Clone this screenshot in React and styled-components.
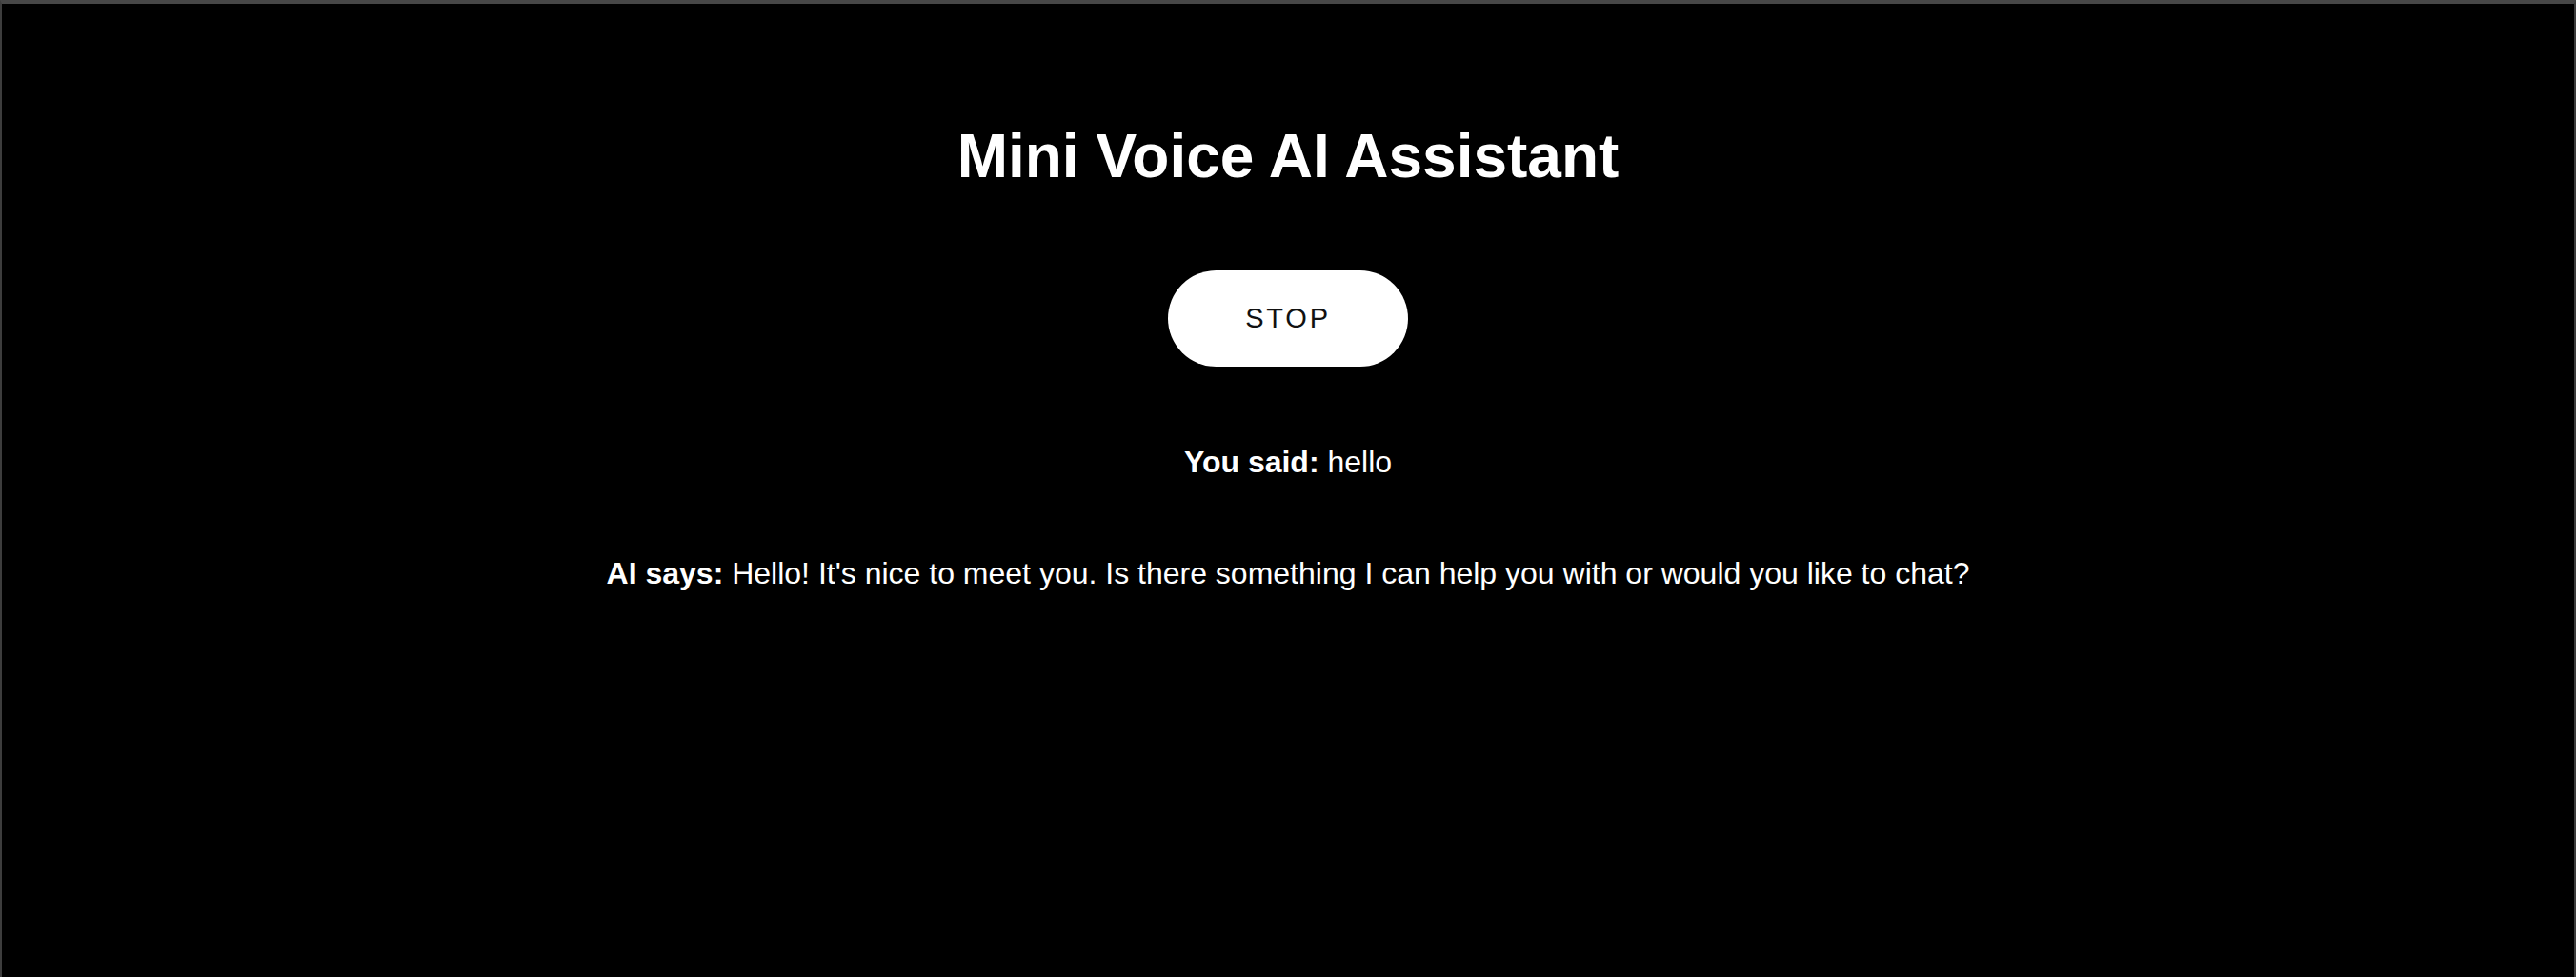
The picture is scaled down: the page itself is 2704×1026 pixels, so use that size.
import React from "react";
import styled, { createGlobalStyle } from "styled-components";

const GlobalStyle = createGlobalStyle`
  html, body {
    margin: 0;
    padding: 0;
    background: #000;
  }
  body {
    font-family: "Liberation Sans", Arial, Helvetica, sans-serif;
    color: #fff;
  }
`;

const Page = styled.main`
  box-sizing: border-box;
  min-height: 100vh;
  background: #000;
  border-top: 4px solid #474747;
  border-left: 2px solid #3d3d3d;
  border-right: 2px solid #3d3d3d;
  padding-top: 123px;
  display: flex;
  flex-direction: column;
  align-items: center;
`;

const Title = styled.h1`
  margin: 0;
  font-size: 64px;
  font-weight: 700;
  line-height: normal;
  color: #fff;
`;

const PillButton = styled.button`
  margin-top: 83px;
  border: none;
  border-radius: 60px;
  background: #fff;
  color: #111;
  font-family: "Liberation Sans", Arial, Helvetica, sans-serif;
  font-size: 29px;
  font-weight: 400;
  letter-spacing: 2.8px;
  line-height: 33px;
  padding: 34px 81px;
  cursor: pointer;
`;

const Line = styled.p`
  margin: ${(p) => p.$gap}px 0 0;
  font-size: 32px;
  line-height: normal;
  color: #fff;
  text-align: center;
`;

const Label = styled.strong`
  font-weight: 700;
`;

export default function App() {
  return (
    <>
      <GlobalStyle />
      <Page>
        <Title>Mini Voice AI Assistant</Title>
        <PillButton>STOP</PillButton>
        <Line $gap={82}>
          <Label>You said:</Label> hello
        </Line>
        <Line $gap={80}>
          <Label>AI says:</Label> Hello! It's nice to meet you. Is there something I can help you with or would you like to chat?
        </Line>
      </Page>
    </>
  );
}
